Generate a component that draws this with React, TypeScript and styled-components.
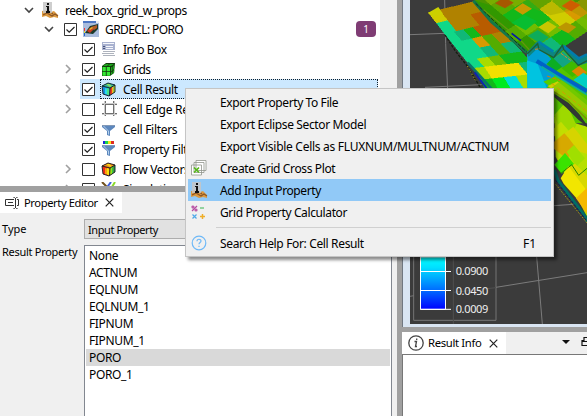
import React from "react";
import styled, { createGlobalStyle } from "styled-components";

const GlobalStyle = createGlobalStyle`
  * { box-sizing: border-box; }
  html, body { margin: 0; overflow: hidden; }
  body {
    width: 587px; height: 416px; background: #f0f0f0; color: #000;
    font: 12px/16px "Noto Sans", "Open Sans", sans-serif;
  }
`;

const Window = styled.div`
  position: relative;
  display: grid;
  grid-template-columns: 397px 5px 185px;
  grid-template-rows: 416px;
  width: 587px;
  height: 416px;
  overflow: hidden;
`;
const Column = styled.div`
  display: flex;
  flex-direction: column;
  min-width: 0;
  min-height: 0;
  overflow: hidden;
`;
const Splitter = styled.div<{ $h?: number }>`
  flex: none;
  background: #a0a0a0;
  ${(p) => (p.$h ? `height: ${p.$h}px;` : "")}
`;
const Label = styled.span<{ $track?: number; $size?: number }>`
  white-space: pre;
  letter-spacing: ${(p) => p.$track ?? -0.2}px;
  ${(p) => (p.$size ? `font-size: ${p.$size}px;` : "")}
`;

/* Project tree */
const TreePanel = styled.div`
  display: flex;
  flex: none;
  height: 186px;
  padding-right: 1px;
  background: #f0f0f0;
  overflow: hidden;
`;
const Tree = styled.div`
  width: 380px;
  background: #fff;
`;
const TreeRow = styled.div<{ $indent: number }>`
  display: flex;
  align-items: center;
  height: 20px;
  padding-left: ${(p) => p.$indent}px;
  &:first-child { height: 19px; }
`;
const Arrow = styled.svg`
  flex: none;
  width: 10px;
  height: 10px;
  margin-right: 8px;
`;
const RowBody = styled.div<{ $selected?: boolean }>`
  display: flex;
  align-items: center;
  flex: 1;
  height: 20px;
  padding-left: 2px;
  margin-right: 2px;
  background: ${(p) => (p.$selected ? "#cce8ff" : "transparent")};
`;
const RowFocus = styled.div<{ $selected?: boolean }>`
  display: flex;
  align-items: center;
  flex: 1;
  height: 20px;
  margin-left: 5px;
  border: 1px dotted ${(p) => (p.$selected ? "#10202c" : "transparent")};
`;
const RowText = styled.span`
  display: block;
  padding-top: 2px;
`;
const Box = styled.svg`
  flex: none;
  width: 13px;
  height: 13px;
`;
const IconSlot = styled.span<{ $w: number; $gap: number }>`
  display: flex;
  flex: none;
  width: ${(p) => p.$w}px;
  margin-right: ${(p) => p.$gap}px;
  svg { display: block; }
`;
const Badge = styled.span`
  width: 20px;
  height: 16px;
  margin: 0 1px 0 auto;
  border-radius: 4px;
  background: #7f3c74;
  color: #fff;
  font-size: 10px;
  line-height: 17px;
  text-align: center;
`;

/* Dock tabs */
const TabBar = styled.div<{ $h: number }>`
  display: flex;
  flex: none;
  height: ${(p) => p.$h}px;
  background: #f0f0f0;
`;
const Tab = styled.div<{ $w: number; $pad: number }>`
  display: flex;
  align-items: center;
  width: ${(p) => p.$w}px;
  padding-left: ${(p) => p.$pad}px;
  background: #fff;
`;
const TabClose = styled.svg`
  width: 9px;
  height: 9px;
  margin-left: auto;
  margin-right: 8px;
`;

/* Property editor */
const Form = styled.div`
  flex: 1;
  display: grid;
  grid-template-columns: 82px 308px;
  grid-template-rows: 20px 180px;
  row-gap: 6px;
  padding: 6px 0 0 2px;
  background: #f0f0f0;
`;
const FieldLabel = styled.div<{ $top: number }>`
  margin-top: ${(p) => p.$top}px;
  font-size: 11px;
`;
const Combo = styled.div`
  display: flex;
  align-items: center;
  padding: 2px 0 0 3px;
  border: 1px solid #adadad;
  background: #e1e1e1;
  font-size: 11px;
`;
const ListBox = styled.div`
  border: 1px solid #828790;
  background: #fff;
  padding: 1px;
`;
const Option = styled.div<{ $selected?: boolean }>`
  height: 17px;
  padding-left: 3px;
  line-height: 18px;
  font-size: 12px;
  background: ${(p) => (p.$selected ? "#d9d9d9" : "transparent")};
`;

/* 3D view */
const ViewFrame = styled.div`
  flex: none;
  height: 327px;
  padding: 0 0 3px 7px;
  border-left: 1px solid #707780;
  background: #d9e5f2;
`;
const Scene = styled.svg`
  display: block;
  width: 177px;
  height: 324px;
  background: #3b3b3b;
`;
const TabTools = styled.svg`
  width: 30px;
  height: 21px;
  margin-left: auto;
`;
const ResultPane = styled.div`
  flex: 1;
  border: solid #777;
  border-width: 1px 0 0 1px;
  background: #fff;
`;

/* Context menu */
const Menu = styled.div`
  position: absolute;
  left: 185px;
  top: 88px;
  width: 369px;
  height: 169px;
  padding: 2px;
  border: 1px solid #c5c5c5;
  background: #f0f0f0;
  box-shadow: 3px 3px 3px rgba(0, 0, 0, 0.45);
`;
const MenuItem = styled.div<{ $active?: boolean }>`
  display: flex;
  align-items: center;
  height: 22px;
  padding-left: 3px;
  padding-right: 15px;
  background: ${(p) => (p.$active ? "#91c9f7" : "transparent")};
`;
const Separator = styled.div`
  height: 9px;
  padding: 4px 0 4px 28px;
  &::after { content: ""; display: block; height: 1px; background: #d0d0d0; }
`;
const Shortcut = styled.span`
  margin-left: auto;
  padding-top: 2px;
`;

const InputIcon = () => (
  <svg width="17" height="16" viewBox="0 0 17 16">
    <path d="M0 9 5 8l4 2 3-1 4 4v3l-4-1-4 1-4-2-4 1z" fill="#dc9a40" />
    <path d="m1 13 4-2 5 3 3-2 3 2M6 8l5 4" fill="none" stroke="#8b5525" strokeWidth="1.2" />
    <path d="M1 0h9v11H1z" fill="#c6c6c6" opacity=".85" />
    <path d="M5 1h2v2H5zM4 4h3v5h1v2H4V9h1V5H4z" fill="#111" />
  </svg>
);
const CaseIcon = () => (
  <svg width="16" height="16" viewBox="0 0 16 16">
    <path d="M0 0h16v16H0z" fill="#a9bcdd" />
    <path d="M0 0h16v2H0z" fill="#4e77c4" />
    <path d="M13 0h3v2h-3z" fill="#e9edf5" />
    <path d="m2 12 5-7 8-2v5l-5 5z" fill="#1b3a2b" />
    <path d="m4 10 4-4 3 2-4 4z" fill="#cf3a20" />
    <path d="m8 6 6-2v3l-3 2z" fill="#b25a28" />
    <path d="m6 8 3-2 1 1-3 2z" fill="#e2ba2a" />
    <path d="M1 7h1v3H1z" fill="#e33" />
    <path d="M1 10h1v2H1z" fill="#dd3" />
    <path d="M1 12h1v3H1z" fill="#26c" />
  </svg>
);
const InfoIcon = () => (
  <svg width="15" height="14" viewBox="0 0 15 14">
    <path d="M1 0h13v8H1z" fill="#a8b1cf" />
    <path d="M2 1h11v1H2zM5 4h7v1H5zM5 6h7v1H5z" fill="#f4f6fb" />
    <path d="M2 4h2v1H2zM2 6h2v1H2z" fill="#48537a" />
    <path d="M2 9.5h12M1 11.5h12M2 13.5h12" stroke="#aeb3bd" />
  </svg>
);
const GridsIcon = () => (
  <svg width="15" height="15" viewBox="0 0 15 15">
    <path d="m1 4 4-3h9l-1 10-4 3H1z" fill="#123c0d" />
    <path d="M1.5 5h3.3v4H1.5zM5.7 5H9v4H5.7zM1.5 9.8h3.3v4H1.5zM5.7 9.8H9v4H5.7z" fill="#35ea35" />
    <path d="m2 4 3-2h3L6 4zM7 4l2-2h4l-3 2zM10 5.5l1.4-1v3.8L10 9.5zm2-1.5 1.2-1v3.6L12 8zm-2 6.5 1.4-1V12L10 13zm2-1.5 1.2-1v2.5l-1.2 1z" fill="#1fa81f" />
  </svg>
);
const CubeIcon = ({ warm = false }: { warm?: boolean }) => (
  <svg width="15" height="15" viewBox="0 0 15 15">
    <path d="m1 4 6-3 7 2v7l-6 4-6-2z" fill={warm ? "#f02a18" : "#1888e0"} />
    <path d="m1 4 6-3 7 2-5 3z" fill={warm ? "#f08a1e" : "#35b89a"} />
    <path d="m5 2 3 0 3 2-2 1z" fill={warm ? "#f6d610" : "#8be05a"} />
    <path d="m4 6 2 .5v6L4 12z" fill={warm ? "#f8a010" : "#28dce8"} />
    <path d="m6 6 2.500.5v7L6 12.500z" fill={warm ? "#f6e010" : "#48e088"} />
    <path d="m9 6 2-1v7l-2 1z" fill={warm ? "#9ae018" : "#e83820"} />
    <path d="m11 5 1.500-1v7L11 12z" fill={warm ? "#30c840" : "#f4b818"} />
    <path d="m12.500 4 1.500-1v7l-1.500 1z" fill={warm ? "#18a850" : "#b8d820"} />
    <path d="m1 4 6-3 7 2v7l-6 4-6-2zM1 4l8 2 5-3M9 6l-.5 8" fill="none" stroke="#111c20" strokeWidth=".9" />
  </svg>
);
const EdgeIcon = () => (
  <svg width="16" height="16" viewBox="0 0 16 16" fill="none" stroke="#707070">
    <path d="M4.500 0v15M12.500 0v15M1 3.500h15M1 12.500h15" />
    <path d="M3.500 0v15M13.500 0v15M1 2.500h15M1 13.500h15" stroke="#ccc" />
  </svg>
);
const FunnelIcon = ({ rainbow = false }: { rainbow?: boolean }) => (
  <svg width="15" height="16" viewBox="0 0 15 16">
    {rainbow && (
      <>
        <path d="M2 0h3v3H2z" fill="#1926dc" />
        <path d="M4 0h3v3H4z" fill="#18d34c" />
        <path d="M7 0h3v3H7z" fill="#efe51f" />
        <path d="M10 0h3v3h-3z" fill="#e12b20" />
      </>
    )}
    <path d="M1 4h13v2L9 10v5l-3-1v-4L1 6z" fill="#5c87bd" />
    <path d="m3 5 5 5v4l-1-1v-3L2 5z" fill="#b4d0ec" />
    <path d="M1 4h13v1H1z" fill="#8298b5" />
  </svg>
);
const StreamIcon = () => (
  <svg width="15" height="15" viewBox="0 0 15 15" fill="none" strokeWidth="2">
    <path d="m1 0 4 4 1 8" stroke="#70501b" />
    <path d="M10 0 7 4l1 7" stroke="#3b5ddc" />
    <path d="m14 0-3 5-2 7" stroke="#8bdb2c" />
  </svg>
);
const PlotIcon = () => (
  <svg width="16" height="16" viewBox="0 0 16 16" fill="#fff" stroke="#90948b" strokeWidth=".8">
    <path d="M5 .5h10v10H5zM3 2.500h10v10H3zM.5 5h10v10H.5z" />
    <path d="m3 7.500 5 5m0-5-5 5" stroke="#55b719" strokeWidth="1.7" />
  </svg>
);
const CalcIcon = () => (
  <svg width="15" height="15" viewBox="0 0 15 15" fill="none" strokeWidth="1.2">
    <circle cx="2" cy="2" r="1" stroke="#b54ba1" />
    <circle cx="5" cy="5" r="1" stroke="#b54ba1" />
    <path d="m1 6 5-5" stroke="#b54ba1" />
    <path d="M9 3h4" stroke="#58be6c" />
    <path d="m1.500 9.500 4 4m0-4-4 4" stroke="#4ea8e8" />
    <path d="M11.500 9v5M9 11.500h5" stroke="#efae28" strokeWidth="1.5" />
  </svg>
);
const HelpIcon = () => (
  <svg width="16" height="16" viewBox="0 0 16 16" fill="none" stroke="#6fb9f7" strokeWidth="1.2">
    <circle cx="8" cy="8" r="6.800" />
    <path d="M6 6.200c0-2.600 4-2.500 4-.2C10 7.500 8 7.400 8 9.200M8 10.800v1.200" />
  </svg>
);

const icons: Record<string, React.ReactNode> = {
  input: <InputIcon />, case: <CaseIcon />, info: <InfoIcon />, grids: <GridsIcon />,
  cube: <CubeIcon />, flow: <CubeIcon warm />, edge: <EdgeIcon />, funnel: <FunnelIcon />,
  propfunnel: <FunnelIcon rainbow />, stream: <StreamIcon />, plot: <PlotIcon />,
  calc: <CalcIcon />, help: <HelpIcon />,
};

const CheckBox = ({ on }: { on?: boolean }) => (
  <Box viewBox="0 0 13 13" fill="none">
    <path d="M.5.5h12v12H.5z" fill="#fff" stroke="#333" />
    {on && <path d="m2.500 6.500 2.700 2.700L10.500 4" stroke="#222" strokeWidth="1.200" />}
  </Box>
);

type Row = { text: string; icon: string; arrow?: "down" | "right"; on?: boolean; selected?: boolean; badge?: string; indent: number; track?: number };
const rows: Row[] = [
  { text: "GRDECL: PORO", icon: "case", arrow: "down", on: true, indent: 44, badge: "1", track: -0.6 },
  { text: "Info Box", icon: "info", on: true, indent: 62, track: -0.45 },
  { text: "Grids", icon: "grids", arrow: "right", on: true, indent: 62, track: -0.45 },
  { text: "Cell Result", icon: "cube", arrow: "right", on: true, indent: 62, selected: true, track: -0.33 },
  { text: "Cell Edge Result", icon: "edge", arrow: "right", indent: 62, track: -0.3 },
  { text: "Cell Filters", icon: "funnel", on: true, indent: 62, track: -0.3 },
  { text: "Property Filters", icon: "propfunnel", on: true, indent: 62, track: -0.35 },
  { text: "Flow Vectors", icon: "flow", arrow: "right", indent: 62, track: -0.35 },
  { text: "Simulation", icon: "stream", arrow: "right", indent: 62, track: -0.35 },
];

const ArrowIcon = ({ dir }: { dir?: "down" | "right" }) => (
  <Arrow viewBox="0 0 10 10" fill="none" strokeWidth="1.600">
    {dir === "down" && <path d="m1 3 4 4 4-4" stroke="#444" />}
    {dir === "right" && <path d="m4 1 4 4-4 4" stroke="#a0a0a0" />}
  </Arrow>
);

const menuItems = [
  { text: "Export Property To File", track: -0.4 },
  { text: "Export Eclipse Sector Model", track: -0.36 },
  { text: "Export Visible Cells as FLUXNUM/MULTNUM/ACTNUM", track: -0.28 },
  { text: "Create Grid Cross Plot", icon: "plot", track: -0.37 },
  { text: "Add Input Property", icon: "input", active: true, track: -0.4 },
  { text: "Grid Property Calculator", icon: "calc", track: -0.38 },
];

/* Reservoir surface: cells interpolated between two edge polylines */
type Pt = [number, number];
const cellColors: Record<string, string> = {
  y: "#d0cc00", Y: "#f2e000", o: "#b08200", O: "#b85c00", a: "#d89a00", g: "#12b81a", G: "#00ea20",
  d: "#329800", l: "#72bc00", L: "#a8dc00", t: "#10b878", T: "#10d888", c: "#00ded8", b: "#009fd2",
  B: "#0060c8", n: "#087c80", m: "#54ac00", v: "#8a9c00",
};
const lerp = (a: Pt, b: Pt, t: number): Pt => [a[0] + (b[0] - a[0]) * t, a[1] + (b[1] - a[1]) * t];
const Sheet = ({ left, right, cells }: { left: Pt[]; right: Pt[]; cells: string[] }) => (
  <g shapeRendering="crispEdges">
    {cells.map((line, r) =>
      line.split("").map((key, c) => {
        const n = line.length;
        const q = [
          lerp(left[r], right[r], c / n), lerp(left[r], right[r], (c + 1) / n),
          lerp(left[r + 1], right[r + 1], (c + 1) / n), lerp(left[r + 1], right[r + 1], c / n),
        ];
        return <polygon key={`${r}-${c}`} points={q.join(" ")} fill={cellColors[key]} stroke={cellColors[key]} strokeWidth="1.500" />;
      })
    )}
  </g>
);
const run = (from: Pt, to: Pt, n: number): Pt[] => Array.from({ length: n + 1 }, (_, i) => lerp(from, to, i / n));

const ReservoirView = () => (
  <Scene viewBox="45 0 531 972">
    <defs>
      <clipPath id="upper"><path d="M235 0h341v185l-26 12-48-58-26 34-48-46-28 30-110-92z" /></clipPath>
      <clipPath id="front"><path d="M395 155l40-10 45 27 28-25 42 50 26-16v480l-98-131-80-190z" /></clipPath>
      <linearGradient id="legend" x1="0" y1="0" x2="0" y2="1">
        <stop offset="0" stopColor="#00ffff" /><stop offset=".2" stopColor="#00e0ff" />
        <stop offset=".62" stopColor="#0070ff" /><stop offset="1" stopColor="#0000ff" />
      </linearGradient>
    </defs>
    <g fill="none" stroke="#7b7b7b" strokeWidth="3">
      <path d="M149 0l3 130 6 140M45 104l105-4M90 262l170-8M425 770l17 202M303 862l273-44M477 617l58-4" />
      <path d="M45 889l12-2M303 770v191H56V770" stroke="#757575" />
      <path d="M175 770v202M175 877l128-14" stroke="#505050" />
    </g>
    <g clipPath="url(#upper)">
      <Sheet
        left={run([180, -20], [430, 190], 7)}
        right={run([440, -190], [690, 20], 7)}
        cells={["dmomlmd", "dlOdomv", "dmlgavm", "dggmydo", "mlgyldm", "dmlyavl", "ntgmldv"]}
      />
      <path d="M235 0h341v60l-50-28-60 14-70-28-90 4z" fill="#889000" opacity=".3" />
      <path d="m300 10 28-18 28 16-26 17z" fill="#a75700" />
      <path d="m357 28 26-18 28 16-28 18z" fill="#c89b00" />
      <path d="m500 18 27-18 29 15-27 19z" fill="#ce5d00" />
      <path d="m350 68 38-24 38 20-34 27z" fill="#08bd31" />
      <path d="m430 82 28-18 27 16-25 20z" fill="#c9c600" />
      <path d="m487 83 26-16 31 14-24 19z" fill="#bb9600" />
      <path d="m398 108 30-18 33 22-24 18z" fill="#0dac59" />
    </g>
    <Sheet
      left={[[100, 38], [125, 70], [150, 103], [172, 130], [192, 155], [213, 182], [235, 205], [256, 240], [275, 275]]}
      right={[[235, 5], [262, 35], [290, 68], [320, 95], [350, 125], [380, 155], [405, 185], [435, 220], [470, 275]]}
      cells={["yooo", "TooO", "TtgOO", "TTamo", "TTtmt", "TLlgg", "LYYYt", "gGcLb"]}
    />
    <path d="m100 38 30-17 14 20-29 9z" fill="#cbd000" />
    <g clipPath="url(#front)">
      <path d="M380 140h196v230H380z" fill="#55c400" />
      <path d="m438 175 38-8 34 28-30 20z" fill="#0cae22" />
      <path d="m475 175 30-21 34 35-32 17z" fill="#12a582" />
      <path d="m500 205 30-22 36 26-34 22z" fill="#3fb900" />
      <path d="m530 214 22-16 24 19-22 16z" fill="#db8800" />
      <path d="m535 240 30-22 11 8v40z" fill="#00cfc4" />
      <path d="m395 155 42-10 32 32-15 16 25 35-26 39-50-32z" fill="#00a0d4" />
      <path d="m393 180 35 12 28 75-55 8-30-40z" fill="#00c4e0" />
      <path d="m445 245 45-20 60 60-20 20z" fill="#55ce00" />
      <path d="m458 258 30-14 88 72v30z" fill="#cfd000" />
      <path d="m470 263 50 45 56 55V300l-76-60z" fill="#7ec800" opacity=".7" />
      <path d="m478 350 98 30v270l-94-180z" fill="#b6e000" />
      <path d="m478 345 35-40 31 70-33 64z" fill="#9ed900" />
      <path d="m478 385 20-20 32 38-22 17-30-12z" fill="#c2de00" />
      <path d="m478 425 30-25 38 40-30 37-38-30z" fill="#d7a900" />
      <path d="m510 400 25-20 41 52v30l-25-8z" fill="#d6d400" />
      <path d="m515 455 22-20 33 40-26 25z" fill="#a0df00" />
      <path d="m478 494 32-35 27 33-37 29z" fill="#3be300" />
      <path d="m516 505 24-14 36 35v67l-35-52z" fill="#d8d800" />
      <path d="m497 535 23-37 56 75v58l-70-80z" fill="#f2e600" />
      <path d="m543 595 33-32v78z" fill="#f5b900" />
      <path d="m497 521 33-27 21 32 25-21" fill="none" stroke="#287e00" strokeWidth="3" />
    </g>
    <path d="m235 2 55 64 105 91" fill="none" stroke="#14784a" strokeWidth="9" />
    <path d="m242 10 54 52 99 94" fill="none" stroke="#183218" strokeWidth="3" strokeDasharray="12 4" />
    <path d="m266 29 110 91 32 35" fill="none" stroke="#64960e" strokeWidth="4" />
    <path d="m350 100 28 22" stroke="#0019ac" strokeWidth="5" />
    <path d="M395 158l32-34 50 33 27-22 47 41 25-13v26l-26 8-46-48-27 25-49-29-27 25z" fill="#0c8580" />
    <path d="m430 125 45 30m30-18 46 38 25-12" fill="none" stroke="#007dad" strokeWidth="8" />
    <path d="m397 161 31-30 4 18 44 24 26-37 4 12 44 48 27-14" fill="none" stroke="#1d5e35" strokeWidth="4" />
    <path d="m420 148 14-2m64 14 30 22" fill="none" stroke="#d4872a" strokeWidth="3" strokeDasharray="10 3" />
    <path d="m150 105 31 48 38 48 18 31 24 38" fill="none" stroke="#151e10" strokeWidth="4" strokeDasharray="8 4" />
    <path d="m218 188 39 42 35 39" fill="none" stroke="#0a746a" strokeWidth="8" />
    <path d="m239 217 39 52" fill="none" stroke="#1022b2" strokeWidth="6" />
    <path d="m217 198 24 43" fill="none" stroke="#d5d000" strokeWidth="2" strokeDasharray="4 5" />
    <path d="m425 183 78 48 73 43" fill="none" stroke="#0062c8" strokeWidth="13" />
    <path d="m440 200 136 84" fill="none" stroke="#0cae9a" strokeWidth="5" />
    <path d="m456 228 40 14" fill="none" stroke="#dc7a00" strokeWidth="3" strokeDasharray="12 5" />
    <path d="m470 250 106 84" fill="none" stroke="#d49b00" strokeWidth="3" strokeDasharray="13 7" />
    <path d="m478 281 43 28 31 32 24 34v5l-26-21-36-36-36-31z" fill="#303633" />
    <path d="m478 277 40 24 58 57" fill="none" stroke="#7a9500" strokeWidth="5" />
    <path d="m478 510 11 31 87 115v9" fill="none" stroke="#006d65" strokeWidth="9" />
    <path d="m482 541 94 123" fill="none" stroke="#121a55" strokeWidth="3" strokeDasharray="8 5" />
    <path d="m482 553 94 116" fill="none" stroke="#d5c400" strokeWidth="2" strokeDasharray="5 4" />
    <path d="M76.500 771h75v157h-75z" fill="url(#legend)" stroke="#fff" strokeWidth="3" />
    <path d="M76 814.500h92M76 871.500h92M76 928h92" stroke="#fff" strokeWidth="3" />
    <g fill="#eee" fontFamily="Noto Sans" fontSize="33">
      <text x="182" y="825" textLength="98">0.0900</text>
      <text x="182" y="885" textLength="98">0.0450</text>
      <text x="182" y="939" textLength="98">0.0009</text>
    </g>
  </Scene>
);

const CloseX = () => (
  <TabClose viewBox="0 0 9 9"><path d="m.7.7 7.600 7.600m0-7.600L.7 8.300" stroke="#222" strokeWidth="1.200" /></TabClose>
);

export default function App() {
  return (
    <>
      <GlobalStyle />
      <Window>
        <Column>
          <TreePanel>
            <Tree>
              <TreeRow $indent={24}>
                <ArrowIcon dir="down" />
                <IconSlot $w={17} $gap={6}>{icons.input}</IconSlot>
                <RowText><Label $track={-0.46}>reek_box_grid_w_props</Label></RowText>
              </TreeRow>
              {rows.map((r) => (
                <TreeRow key={r.text} $indent={r.indent}>
                  <ArrowIcon dir={r.arrow} />
                  <RowBody $selected={r.selected}>
                    <CheckBox on={r.on} />
                    <RowFocus $selected={r.selected}>
                      <IconSlot $w={16} $gap={6}>{icons[r.icon]}</IconSlot>
                      <RowText><Label $track={r.track}>{r.text}</Label></RowText>
                      {r.badge && <Badge>{r.badge}</Badge>}
                    </RowFocus>
                  </RowBody>
                </TreeRow>
              ))}
            </Tree>
          </TreePanel>
          <Splitter $h={6} />
          <TabBar $h={21}>
            <Tab $w={122} $pad={5}>
              <IconSlot $w={14} $gap={5}>
                <svg width="14" height="12" viewBox="0 0 14 12" fill="none" stroke="#333">
                  <path d="M9 2.500H.5v6H9M12 2.500h1.500v6H12M3 5.500h5M10.500 1v10M8.500.5h1l1 1 1-1h1M8.500 11.500h1l1-1 1 1h1" />
                </svg>
              </IconSlot>
              <Label $track={-0.4} $size={11.2}>Property Editor</Label>
              <CloseX />
            </Tab>
          </TabBar>
          <Form>
            <FieldLabel $top={2}><Label $track={0}>Type</Label></FieldLabel>
            <Combo><Label $track={-0.4}>Input Property</Label></Combo>
            <FieldLabel $top={-1}><Label $track={-0.28}>Result Property</Label></FieldLabel>
            <ListBox>
              {["None", "ACTNUM", "EQLNUM", "EQLNUM_1", "FIPNUM", "FIPNUM_1", "PORO", "PORO_1"].map((o) => (
                <Option key={o} $selected={o === "PORO"}><Label $track={-0.36}>{o}</Label></Option>
              ))}
            </ListBox>
          </Form>
        </Column>
        <Splitter />
        <Column>
          <ViewFrame><ReservoirView /></ViewFrame>
          <Splitter $h={5} />
          <TabBar $h={22}>
            <Tab $w={104} $pad={6}>
              <IconSlot $w={16} $gap={4}>
                <svg width="16" height="16" viewBox="0 0 16 16" fill="none" stroke="#444" strokeWidth="1.300">
                  <circle cx="8" cy="8" r="7.200" />
                  <path d="M6.500 6.500H8.500L7.500 11.500H9M8.700 3.500v1.500" />
                </svg>
              </IconSlot>
              <Label $track={-0.35} $size={11.3}>Result Info</Label>
              <CloseX />
            </Tab>
            <TabTools viewBox="0 0 30 21">
              <path d="M5 8h8l-4 4z" fill="#111" />
              <path d="M30 5.500h-3v3h-2v5h5M25 9.500h5" fill="none" stroke="#111" strokeWidth="1.200" />
            </TabTools>
          </TabBar>
          <ResultPane />
        </Column>
        <Menu>
          {menuItems.map((m) => (
            <MenuItem key={m.text} $active={m.active}>
              <IconSlot $w={17} $gap={12}>{m.icon && icons[m.icon]}</IconSlot>
              <RowText><Label $track={m.track}>{m.text}</Label></RowText>
            </MenuItem>
          ))}
          <Separator />
          <MenuItem>
            <IconSlot $w={17} $gap={12}>{icons.help}</IconSlot>
            <RowText><Label $track={-0.35}>Search Help For: Cell Result</Label></RowText>
            <Shortcut>F1</Shortcut>
          </MenuItem>
        </Menu>
      </Window>
    </>
  );
}
